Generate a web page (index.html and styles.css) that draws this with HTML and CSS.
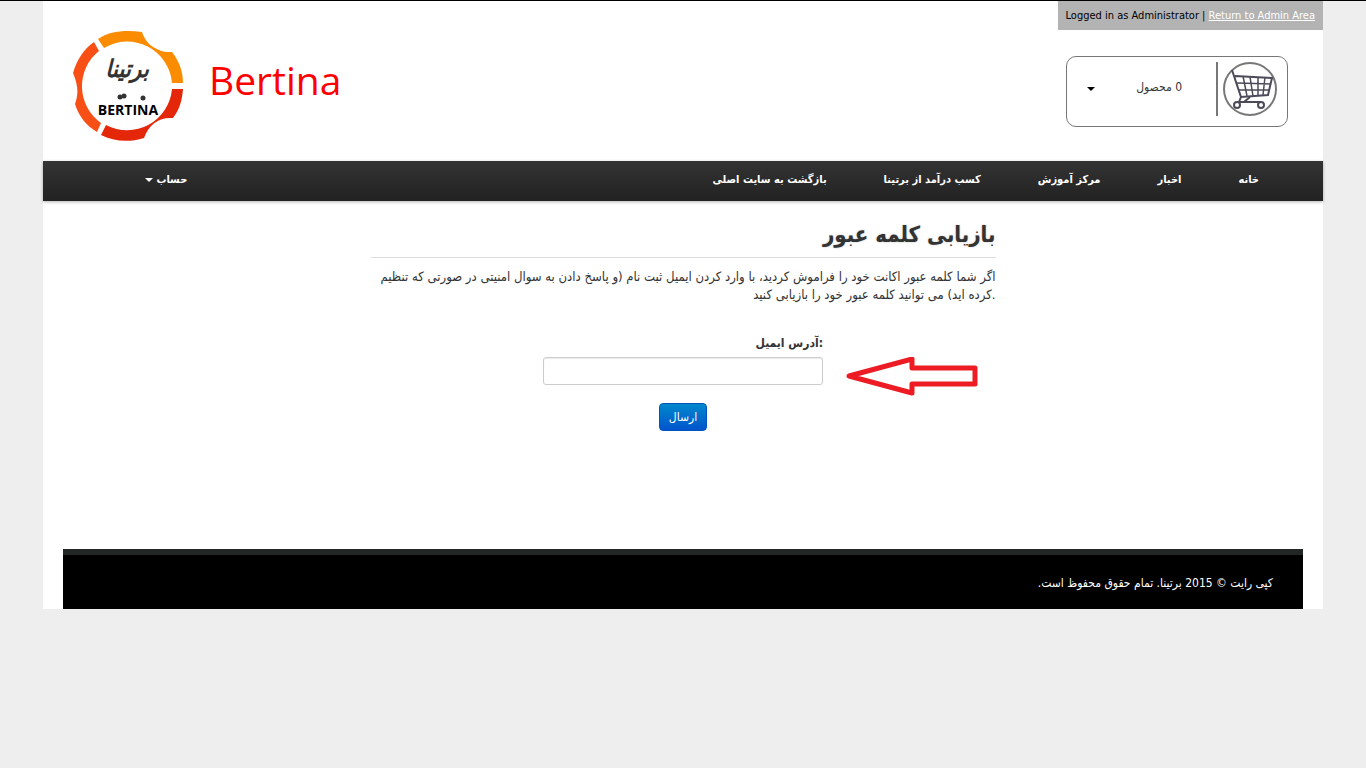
FILE: index.html
```html
<!DOCTYPE html>
<html lang="fa">
<head>
    <meta charset="UTF-8">
    <meta name="viewport" content="width=device-width, initial-scale=1.0">
    <title>Bertina</title>
    <link rel="stylesheet" href="styles.css">
</head>
<body>
    <div class="page">
        <div class="header">
            <a class="brand" href="#">
                <svg class="logo" viewBox="0 0 110 110" aria-hidden="true">
                    <path fill="#fb8c00" d="M25 8 C37 0 52 -1 69 1 C72 10 77 15 84 18 C89 21 94 21 99 21 C107 31 110 42 110 52 L99 52 A45 45 0 0 0 31 17 Z"/>
                    <path fill="#f84f16" d="M21 11 L26 20 A45 45 0 0 0 28 92 L24 101 C14 95 6 86 2 73 C5 65 6 56 0 42 C4 28 11 18 21 11 Z"/>
                    <path fill="#e32708" d="M110 58 C109 69 107 78 100 87 C86 86 76 93 71 107 C55 112 40 110 28 104 L33 94 A45 45 0 0 0 99 58 Z"/>
                    <text class="logo-fa" x="54" y="46" text-anchor="middle">برتینا</text>
                    <text class="logo-en" x="55" y="84" text-anchor="middle">BERTINA</text>
                    <!-- dots above the latin name -->
                    <g fill="#333">
                        <circle cx="47" cy="66" r="2.5"/>
                        <circle cx="51" cy="65" r="2.5"/>
                        <circle cx="70" cy="67" r="2.5"/>
                    </g>
                </svg>
                <span class="brand-name">Bertina</span>
            </a>
            <div class="header-side">
                <div class="admin-bar">Logged in as Administrator | <a href="#">Return to Admin Area</a></div>
                <button class="cart" type="button">
                    <span class="caret"></span>
                    <span class="cart-count" dir="rtl">0 محصول</span>
                    <span class="cart-line"></span>
                    <svg class="cart-icon" viewBox="0 0 54 54" aria-hidden="true">
                        <circle cx="27" cy="27" r="26" fill="none" stroke="#777" stroke-width="2"/>
                        <g fill="none" stroke="#4c4a58" stroke-width="1.5">
                            <path stroke-width="2" d="M9 8 L18 35 L45 33 L49 16 L12 14"/>
                            <path d="M20 14 L24 34 M27 15 L30 34 M35 15 L35 34 M42 15 L40 33 M14 21 L48 22 M16 28 L46 28"/>
                            <path stroke-width="2" d="M18 35 L16 40 M27 35 L21 40 M16 40 L38 40"/>
                            <circle cx="14" cy="43" r="3" stroke-width="2"/>
                            <circle cx="38" cy="43" r="3" stroke-width="2"/>
                        </g>
                    </svg>
                </button>
            </div>
        </div>

        <div class="nav">
            <ul class="menu" dir="rtl">
                <li><a href="#">خانه</a></li>
                <li><a href="#">اخبار</a></li>
                <li><a href="#">مرکز آموزش</a></li>
                <li><a href="#">کسب درآمد از برتینا</a></li>
                <li><a href="#">بازگشت به سایت اصلی</a></li>
                <li class="account"><a href="#">حساب <span class="caret"></span></a></li>
            </ul>
        </div>

        <div class="content">
            <h1>بازیابی کلمه عبور</h1>
            <p>اگر شما کلمه عبور اکانت خود را فراموش کردید، با وارد کردن ایمیل ثبت نام (و پاسخ دادن به سوال امنیتی در صورتی که تنظیم کرده اید) می توانید کلمه عبور خود را بازیابی کنید.</p>
            <form class="reset-form">
                <label for="email">آدرس ایمیل:</label>
                <div class="field">
                    <input type="text" id="email">
                    <svg class="arrow" viewBox="0 0 132 40" aria-hidden="true">
                        <path fill="none" stroke="#ed1c24" stroke-width="5" stroke-linejoin="round" d="M3 19 L66 2 L66 11 L129 11 L129 27 L66 27 L66 36 Z"/>
                    </svg>
                </div>
                <button class="btn" type="submit">ارسال</button>
            </form>
        </div>

        <div class="footer" dir="rtl">کپی رایت © 2015 برتینا. تمام حقوق محفوظ است.</div>
    </div>
</body>
</html>
```

FILE: styles.css
```css
body{
    margin: 0;
    border-top: 1px solid black;
    background-color: #eee;
    color: #333;
    font-family: "DejaVu Sans Condensed", "DejaVu Sans", sans-serif;
    font-size: 12px;
    line-height: 18px;
}
.page{
    max-width: 1280px;
    margin: auto;
    background-color: white;
}

/* header */
.header{
    display: flex;
    justify-content: space-between;
    min-height: 160px;
}
.brand{
    display: flex;
    align-items: flex-start;
    gap: 26px;
    padding: 30px 30px 20px;
    color: red;
    text-decoration: none;
}
.logo{
    width: 110px;
    height: 110px;
}
.logo-fa{
    font-size: 24px;
    font-style: italic;
    font-weight: bold;
    fill: #333;
}
.logo-en{
    font: bold 14px "Open Sans", sans-serif;
    fill: black;
}
.brand-name{
    font-family: "Open Sans", sans-serif;
    font-size: 39px;
    line-height: 98px;
}
.header-side{
    display: flex;
    flex-direction: column;
    align-items: flex-end;
}
.admin-bar{
    padding: 6px 8px 5px;
    background-color: #b3b3b3;
    color: black;
    font-size: 11px;
}
.admin-bar a{
    color: white;
}
.cart{
    display: flex;
    align-items: center;
    box-sizing: border-box;
    width: 222px;
    height: 71px;
    margin: 26px 35px 0;
    padding: 0 10px 6px 20px;
    border: 1px solid #777;
    border-radius: 10px;
    background-color: white;
    color: #333;
    font-family: inherit;
    font-size: 12px;
}
.caret{
    display: inline-block;
    border-top: 4px solid;
    border-left: 4px solid transparent;
    border-right: 4px solid transparent;
    vertical-align: middle;
}
.cart .caret{
    color: black;
}
.cart-count{
    flex: 1;
    padding-right: 34px;
    padding-bottom: 4px;
    text-align: right;
}
.cart-line{
    width: 2px;
    height: 54px;
    margin-right: 5px;
    background-color: #777;
}
.cart-icon{
    width: 54px;
    height: 54px;
}

/* menu */
.nav{
    background-image: linear-gradient(#333, #222);
    box-shadow: 0 1px 3px rgba(0,0,0,0.3);
}
.menu{
    display: flex;
    gap: 57px;
    height: 40px;
    margin: 0;
    padding: 0 64px 0 102px;
    list-style: none;
    font-size: 11px;
    line-height: 38px;
}
.menu a{
    color: white;
    font-weight: bold;
    text-decoration: none;
}
.menu .account{
    margin-right: auto;
}

/* reset password */
.content{
    box-sizing: border-box;
    max-width: 625px;
    min-height: 348px;
    margin: auto;
    padding-top: 16px;
    text-align: right;
}
.content h1{
    margin: 0;
    padding-bottom: 4px;
    border-bottom: 1px solid #ddd;
    font-size: 22px;
    line-height: 36px;
    text-shadow: 0 0 2px #bbb;
}
.content p{
    margin: 10px 0 30px;
    font-size: 13px;
}
.reset-form{
    max-width: 280px;
    margin: auto;
    text-align: center;
}
.reset-form label{
    display: block;
    margin-bottom: 5px;
    font-size: 12px;
    font-weight: bold;
    text-align: right;
}
.field{
    position: relative;
    margin-bottom: 18px;
}
.field input{
    display: block;
    box-sizing: border-box;
    width: 100%;
    height: 28px;
    border: 1px solid #ccc;
    border-radius: 3px;
    box-shadow: inset 0 1px 1px rgba(0,0,0,0.08);
}
.arrow{
    position: absolute;
    left: 303px;
    top: 0;
    width: 132px;
    height: 40px;
}
.btn{
    height: 28px;
    padding: 0 9px;
    border: 1px solid #0055bb;
    border-radius: 4px;
    background-image: linear-gradient(#0088cc, #0055cc);
    color: white;
    font-family: inherit;
    font-size: 12px;
}

/* footer */
.footer{
    margin: 0 20px;
    padding: 19px 30px 17px;
    border-top: 6px solid #222725;
    background-color: black;
    color: white;
    font-size: 12px;
}
```
